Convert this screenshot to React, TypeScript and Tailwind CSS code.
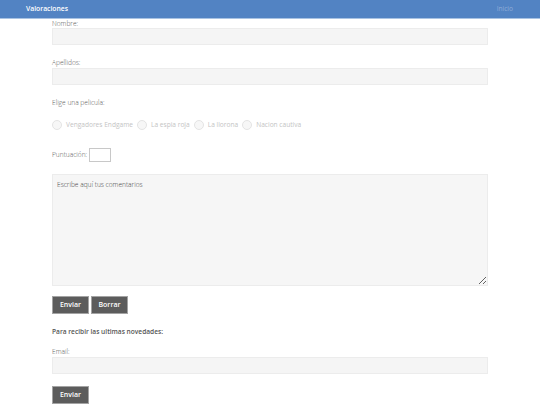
import React from "react";

const font = { fontFamily: '"Open Sans", "Liberation Sans", sans-serif' };

function Radio({ label }: { label: string }) {
  return (
    <label className="flex items-center gap-[4px] mr-[4px]">
      <span className="w-[10px] h-[10px] shrink-0 rounded-full border border-[#e4e4e4] bg-[#f7f7f7] block" />
      <span className="text-[#c4c4c4] font-normal text-[6.6px]">{label}</span>
    </label>
  );
}

export default function App() {
  return (
    <div className="w-[540px] h-[405px] bg-white overflow-hidden text-[6.6px] font-light text-[#5a5a5a]" style={font}>
      <header className="h-[19px] bg-[#5283c3] border-b border-[#a9c3e3] flex items-center justify-between px-[26px]">
        <span className="text-white font-semibold text-[6.8px]">Valoraciones</span>
        <span className="text-[#8fadd8] mr-[1px] font-normal">Inicio</span>
      </header>
      <div className="w-[436px] mx-auto flex flex-col">
        <div className="mt-[1px] h-[8px] leading-[8px]">Nombre:</div>
        <div className="h-[17px] bg-[#f5f5f5] border border-[#ececec]" />
        <div className="mt-[14px] h-[8px] leading-[8px]">Apellidos:</div>
        <div className="mt-[1px] h-[17px] bg-[#f5f5f5] border border-[#ececec]" />
        <div className="mt-[14px] h-[8px] leading-[8px]">Elige una pelicula:</div>
        <div className="mt-[13px] h-[10px] flex items-center leading-[10px]">
          <Radio label="Vengadores Endgame" />
          <Radio label="La espia roja" />
          <Radio label="La llorona" />
          <Radio label="Nacion cautiva" />
        </div>
        <div className="mt-[18px] h-[14px] flex items-center">
          <span>Puntuación:</span>
          <span className="ml-[2px] w-[22px] h-[14px] border border-[#c8c8c8] bg-white block" />
        </div>
        <textarea
          readOnly
          className="mt-[12px] h-[112px] bg-[#f6f6f6] border border-[#ececec] px-[4px] py-[5px] text-[6.6px] font-light leading-[10px] text-[#444] outline-none"
          style={font}
          defaultValue="Escribe aquí tus comentarios"
        />
        <div className="mt-[10px] flex gap-[2px]">
          <button className="h-[18px] w-[37px] bg-[#5c5c5c] border border-[#a3a3a3] text-white font-semibold text-[7px]" style={font}>
            Enviar
          </button>
          <button className="h-[18px] w-[37px] bg-[#5c5c5c] border border-[#a3a3a3] text-white font-semibold text-[7px]" style={font}>
            Borrar
          </button>
        </div>
        <div className="mt-[14px] h-[8px] leading-[8px] font-semibold text-[#555]">Para recibir las ultimas novedades:</div>
        <div className="mt-[12px] h-[8px] leading-[8px]">Email:</div>
        <div className="mt-[1px] h-[17px] bg-[#f5f5f5] border border-[#ececec]" />
        <div className="mt-[12px] flex">
          <button className="h-[18px] w-[37px] bg-[#5c5c5c] border border-[#a3a3a3] text-white font-semibold text-[7px]" style={font}>
            Enviar
          </button>
        </div>
      </div>
    </div>
  );
}
